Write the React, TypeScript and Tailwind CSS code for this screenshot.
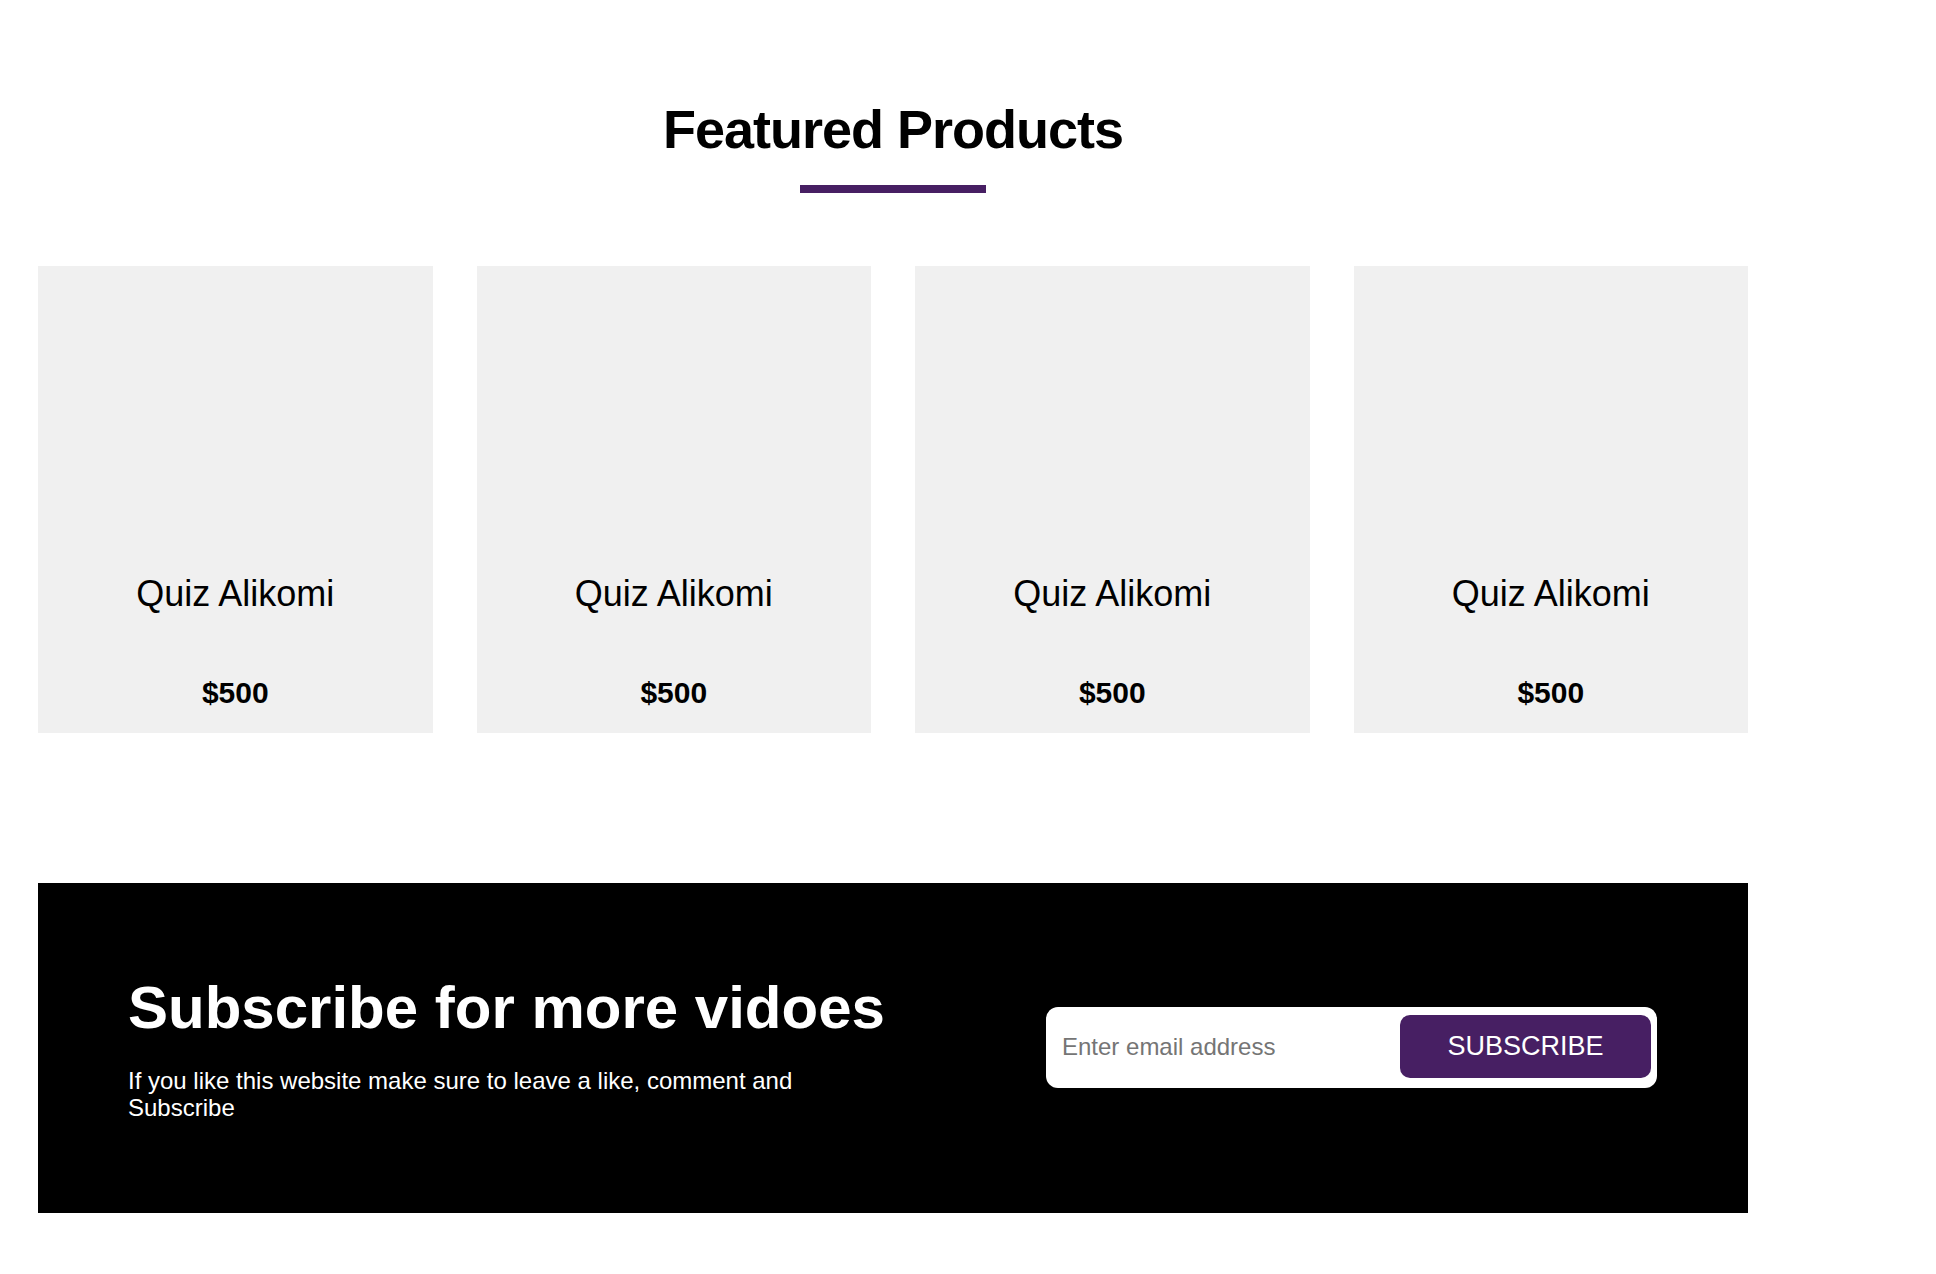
const products = [
  { name: "Quiz Alikomi", price: "$500" },
  { name: "Quiz Alikomi", price: "$500" },
  { name: "Quiz Alikomi", price: "$500" },
  { name: "Quiz Alikomi", price: "$500" },
];

function ProductCard({ name, price }: { name: string; price: string }) {
  return (
    <div className="flex h-[467px] flex-col items-center justify-end bg-[#f0f0f0] pb-[25px] text-black">
      <h3 className="text-[36px] leading-none font-normal">{name}</h3>
      <p className="mt-[66px] text-[30px] leading-none font-bold">{price}</p>
    </div>
  );
}

export default function App() {
  return (
    <div className="min-h-screen bg-white font-['Liberation_Sans',Arial,sans-serif]">
      <div className="ml-[38px] w-[1710px] pt-[102px] pb-[62px]">
        <section className="flex flex-col items-center">
          <h2 className="text-[54px] leading-none font-bold tracking-[-1px] text-black">
            Featured Products
          </h2>
          <div className="mt-[29px] h-[8px] w-[186px] bg-[#471f63]" />
        </section>

        <div className="mt-[73px] grid grid-cols-4 gap-[44px]">
          {products.map((p, i) => (
            <ProductCard key={i} name={p.name} price={p.price} />
          ))}
        </div>

        <section className="mt-[150px] flex h-[330px] items-start justify-between bg-black pt-[95px] pr-[91px] pl-[90px]">
          <div className="w-[764px]">
            <h2 className="text-[60px] leading-none font-bold whitespace-nowrap text-white">
              Subscribe for more vidoes
            </h2>
            <p className="mt-[29px] max-w-[720px] text-[24px] leading-[27px] text-white">
              If you like this website make sure to leave a like, comment and Subscribe
            </p>
          </div>

          <form
            className="mt-[29px] flex w-[611px] items-center rounded-[12px] bg-white pt-[8px] pr-[6px] pb-[10px] pl-[16px]"
            onSubmit={(e) => e.preventDefault()}
          >
            <input
              type="email"
              placeholder="Enter email address"
              className="min-w-0 flex-1 bg-transparent text-[24px] text-black outline-none placeholder:text-[#757575]"
            />
            <button
              type="submit"
              className="h-[63px] w-[251px] rounded-[10px] bg-[#471f63] text-[27px] text-white uppercase"
            >
              Subscribe
            </button>
          </form>
        </section>
      </div>
    </div>
  );
}
